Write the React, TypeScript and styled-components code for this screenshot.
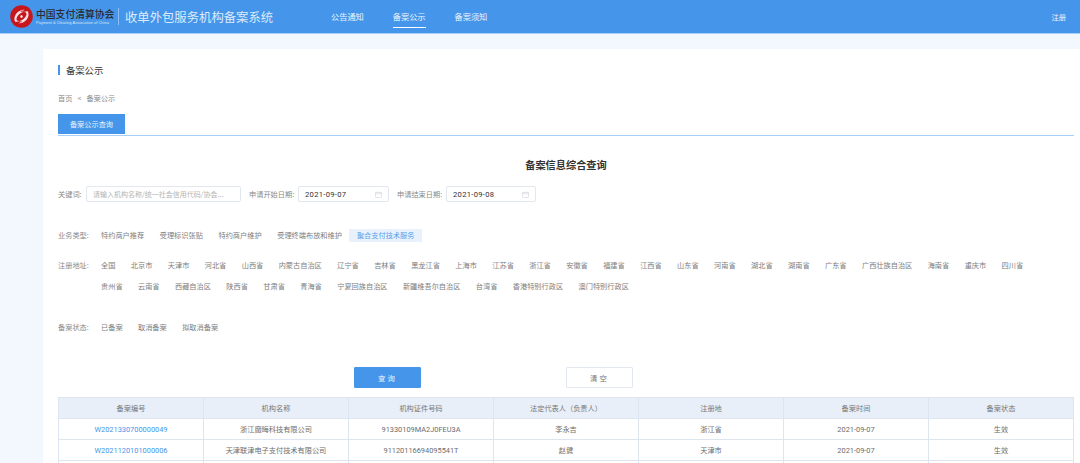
import React from "react";
import styled, { createGlobalStyle } from "styled-components";

const GlobalStyle = createGlobalStyle`
  html, body {
    margin: 0;
    padding: 0;
    height: 463px;
    overflow: hidden;
    background: #f3f7fe;
    font-family: "Noto Sans CJK SC", "Liberation Sans", sans-serif;
  }
`;

const Header = styled.header`
  display: flex;
  align-items: center;
  height: 33px;
  background: #4596ea;
  border-bottom: 1px solid #a9cff6;
  box-sizing: content-box;
  padding: 0 20px 0 10px;
`;

const LogoBlock = styled.div`
  display: flex;
  align-items: center;
  width: 109px;
  gap: 3px;
`;

const LogoWords = styled.div`
  display: flex;
  flex-direction: column;
  color: #2b2b33;
`;

const LogoCn = styled.span`
  font-size: 9.8px;
  line-height: 11px;
  font-weight: 500;
  white-space: nowrap;
`;

const LogoEn = styled.span`
  font-family: "Liberation Sans", sans-serif;
  font-size: 4px;
  line-height: 5px;
  color: #d7e4f4;
  white-space: nowrap;
`;

const Divider = styled.div`
  width: 1px;
  height: 17px;
  margin-left: -1px;
  background: #8dbff2;
`;

const SystemName = styled.div`
  margin-left: 6px;
  width: 206px;
  font-size: 12.35px;
  color: #dcebfb;
  white-space: nowrap;
`;

const Nav = styled.nav`
  display: flex;
  gap: 29px;
`;

const NavItem = styled.a<{ $active?: boolean }>`
  display: block;
  height: 17px;
  margin-top: 2px;
  padding-top: 2px;
  box-sizing: content-box;
  font-size: 8.2px;
  line-height: 13px;
  color: #eef5fd;
  white-space: nowrap;
  border-bottom: 1px solid ${(props) => (props.$active ? "#ffffff" : "transparent")};
`;

const LoginLink = styled.a`
  margin-left: auto;
  font-size: 7.3px;
  color: #eef5fd;
  margin-right: -6px;
`;

const Card = styled.main`
  margin: 15px 0 0 43px;
  height: 420px;
  padding: 16px 6px 0 15px;
  box-sizing: border-box;
  background: #ffffff;
  overflow: hidden;
`;

const PageTitle = styled.h2`
  margin: 0;
  height: 10px;
  padding-left: 6px;
  border-left: 2px solid #4596ea;
  font-size: 9.3px;
  line-height: 10px;
  font-weight: 400;
  color: #333333;
`;

const Breadcrumb = styled.div`
  display: flex;
  gap: 5px;
  margin-top: 18px;
  height: 10px;
  font-size: 7.2px;
  line-height: 10px;
  color: #8a8a8a;
`;

const TabBar = styled.div`
  margin-top: 11px;
  height: 21px;
  border-bottom: 1px solid #a8d0f8;
`;

const Tab = styled.div`
  width: 67px;
  height: 20px;
  background: #4596ea;
  color: #e8f2fd;
  text-align: center;
  font-size: 7.2px;
  line-height: 20px;
`;

const Heading = styled.h1`
  margin: 22px 0 0;
  height: 14px;
  text-align: center;
  font-size: 10.2px;
  line-height: 14px;
  font-weight: 700;
  color: #333333;
`;

const SearchRow = styled.div`
  display: flex;
  align-items: center;
  margin-top: 14px;
  height: 16px;
`;

const FieldLabel = styled.span<{ $gap?: number }>`
  margin-left: ${(props) => props.$gap ?? 0}px;
  width: ${(props) => (props.$gap ? 46 : 25)}px;
  font-size: 7.2px;
  color: #8a8a8a;
  white-space: nowrap;
`;

const Field = styled.div<{ $width: number }>`
  display: flex;
  align-items: center;
  justify-content: space-between;
  width: ${(props) => props.$width}px;
  height: 16px;
  margin-left: 3px;
  padding: 0 6px;
  box-sizing: border-box;
  border: 1px solid #e3e8f0;
  border-radius: 2px;
  background: #ffffff;
`;

const Placeholder = styled.span`
  font-size: 7px;
  color: #b4b4b4;
  white-space: nowrap;
`;

const DateValue = styled.span`
  font-family: "Roboto", "Liberation Sans", sans-serif;
  font-size: 7.6px;
  color: #333333;
  letter-spacing: 0.3px;
`;

const CalendarIcon = styled.svg`
  width: 7px;
  height: 7px;
`;

const FilterRow = styled.div<{ $top: number }>`
  display: flex;
  margin-top: ${(props) => props.$top}px;
`;

const FilterLabel = styled.span`
  flex: none;
  width: 43px;
  font-size: 7.2px;
  line-height: 21px;
  color: #8a8a8a;
  white-space: nowrap;
`;

const Options = styled.div`
  display: flex;
  flex-wrap: wrap;
  width: 935px;
  column-gap: 15.4px;
`;

const BusinessOptions = styled(Options)`
  column-gap: 15.6px;
`;

const Option = styled.span`
  font-size: 7.2px;
  line-height: 21px;
  white-space: nowrap;
  color: #7d7d7d;
`;

const ActiveOption = styled.span`
  height: 13px;
  margin-top: 4px;
  padding: 0 8px;
  margin-left: -8.6px;
  background: #e8f1fc;
  color: #5a9fe8;
  font-size: 7.2px;
  line-height: 13px;
  white-space: nowrap;
`;

const Actions = styled.div`
  display: flex;
  margin: 29px 0 0 296px;
  gap: 145px;
`;

const Button = styled.button<{ $primary?: boolean }>`
  width: 67px;
  height: 21px;
  padding: 0;
  border-radius: 1px;
  border: 1px solid ${(props) => (props.$primary ? "#4596ea" : "#e3e8f0")};
  background: ${(props) => (props.$primary ? "#4596ea" : "#ffffff")};
  color: ${(props) => (props.$primary ? "#e8f2fd" : "#777777")};
  font-family: inherit;
  font-size: 7.4px;
  letter-spacing: 2px;
`;

const Table = styled.table`
  margin-top: 9px;
  width: 1016px;
  border-collapse: collapse;
  table-layout: fixed;
`;

const Th = styled.th`
  height: 20px;
  padding: 0;
  border: 1px solid #dde5f1;
  background: #e8eff9;
  font-size: 7.2px;
  font-weight: 400;
  color: #777777;
`;

const Td = styled.td`
  height: 20px;
  padding: 0;
  border: 1px solid #dde5f1;
  text-align: center;
  font-size: 7.2px;
  color: #6d6d6d;
`;

const Num = styled.span`
  font-family: "Roboto", "Liberation Sans", sans-serif;
  font-size: 7.4px;
`;

const RecordLink = styled(Num)`
  color: #4596ea;
`;

const businessTypes = ["特约商户推荐", "受理标识张贴", "特约商户维护", "受理终端布放和维护"];

const regions = [
  "全国", "北京市", "天津市", "河北省", "山西省", "内蒙古自治区", "辽宁省", "吉林省", "黑龙江省",
  "上海市", "江苏省", "浙江省", "安徽省", "福建省", "江西省", "山东省", "河南省", "湖北省", "湖南省",
  "广东省", "广西壮族自治区", "海南省", "重庆市", "四川省", "贵州省", "云南省", "西藏自治区",
  "陕西省", "甘肃省", "青海省", "宁夏回族自治区", "新疆维吾尔自治区", "台湾省", "香港特别行政区",
  "澳门特别行政区",
];

const statuses = ["已备案", "取消备案", "拟取消备案"];

const columns = ["备案编号", "机构名称", "机构证件号码", "法定代表人（负责人）", "注册地", "备案时间", "备案状态"];

const records = [
  ["W2021330700000049", "浙江魔晦科技有限公司", "91330109MA2J0FEU3A", "李永吉", "浙江省", "2021-09-07", "生效"],
  ["W2021120101000006", "天津联津电子支付技术有限公司", "91120116694095541T", "赵健", "天津市", "2021-09-07", "生效"],
];

const Logo = () => (
  <svg width="23" height="23" viewBox="0 0 46 46" style={{ flex: "none" }}>
    <circle cx="23" cy="23" r="22.5" fill="#c8161d" />
    <g transform="rotate(-40 23 23)">
      <ellipse cx="23" cy="23" rx="16" ry="11.5" fill="#f4e3e4" />
      <ellipse cx="23" cy="23" rx="12" ry="6.5" fill="#c8161d" />
      <circle cx="23" cy="23" r="2.6" fill="#f4e3e4" />
    </g>
    <path d="M36 4 C30 10 26 12 20 12 C26 15 33 14 40 9 Z" fill="#c8161d" />
    <path d="M10 42 C16 36 20 34 26 34 C20 31 13 32 6 37 Z" fill="#c8161d" />
  </svg>
);

const Calendar = () => (
  <CalendarIcon viewBox="0 0 14 14" fill="none" stroke="#c6ccd6" strokeWidth="1">
    <rect x="1.5" y="2.5" width="11" height="10" />
    <path d="M1.5 5.5h11M4.5 1v2M9.5 1v2" />
  </CalendarIcon>
);

export default function App() {
  return (
    <>
      <GlobalStyle />
      <Header>
        <LogoBlock>
          <Logo />
          <LogoWords>
            <LogoCn>中国支付清算协会</LogoCn>
            <LogoEn>Payment &amp; Clearing Association of China</LogoEn>
          </LogoWords>
        </LogoBlock>
        <Divider />
        <SystemName>收单外包服务机构备案系统</SystemName>
        <Nav>
          <NavItem>公告通知</NavItem>
          <NavItem $active>备案公示</NavItem>
          <NavItem>备案须知</NavItem>
        </Nav>
        <LoginLink>注册</LoginLink>
      </Header>
      <Card>
        <PageTitle>备案公示</PageTitle>
        <Breadcrumb>
          <span>首页</span>
          <span>&lt;</span>
          <span>备案公示</span>
        </Breadcrumb>
        <TabBar>
          <Tab>备案公示查询</Tab>
        </TabBar>
        <Heading>备案信息综合查询</Heading>
        <SearchRow>
          <FieldLabel>关键词:</FieldLabel>
          <Field $width={155}>
            <Placeholder>请输入机构名称/统一社会信用代码/协会...</Placeholder>
          </Field>
          <FieldLabel $gap={8}>申请开始日期:</FieldLabel>
          <Field $width={91}>
            <DateValue>2021-09-07</DateValue>
            <Calendar />
          </Field>
          <FieldLabel $gap={8}>申请结束日期:</FieldLabel>
          <Field $width={90}>
            <DateValue>2021-09-08</DateValue>
            <Calendar />
          </Field>
        </SearchRow>
        <FilterRow $top={23}>
          <FilterLabel>业务类型:</FilterLabel>
          <BusinessOptions>
            {businessTypes.map((item) => (
              <Option key={item}>{item}</Option>
            ))}
            <ActiveOption>聚合支付技术服务</ActiveOption>
          </BusinessOptions>
        </FilterRow>
        <FilterRow $top={9}>
          <FilterLabel>注册地址:</FilterLabel>
          <Options>
            {regions.map((item) => (
              <Option key={item}>{item}</Option>
            ))}
          </Options>
        </FilterRow>
        <FilterRow $top={20}>
          <FilterLabel>备案状态:</FilterLabel>
          <Options>
            {statuses.map((item) => (
              <Option key={item}>{item}</Option>
            ))}
          </Options>
        </FilterRow>
        <Actions>
          <Button $primary>查询</Button>
          <Button>清空</Button>
        </Actions>
        <Table>
          <thead>
            <tr>
              {columns.map((col) => (
                <Th key={col}>{col}</Th>
              ))}
            </tr>
          </thead>
          <tbody>
            {records.map(([id, name, code, person, place, date, state]) => (
              <tr key={id}>
                <Td>
                  <RecordLink>{id}</RecordLink>
                </Td>
                <Td>{name}</Td>
                <Td>
                  <Num>{code}</Num>
                </Td>
                <Td>{person}</Td>
                <Td>{place}</Td>
                <Td>
                  <Num>{date}</Num>
                </Td>
                <Td>{state}</Td>
              </tr>
            ))}
            <tr>
              {columns.map((col) => (
                <Td key={col} />
              ))}
            </tr>
          </tbody>
        </Table>
      </Card>
    </>
  );
}
